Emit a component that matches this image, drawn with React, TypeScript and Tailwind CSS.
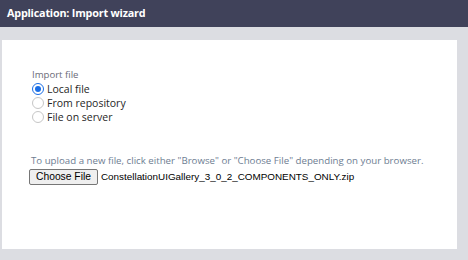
export default function App() {
  const options = [
    { label: "Local file", checked: true },
    { label: "From repository", checked: false },
    { label: "File on server", checked: false },
  ];

  return (
    <div className="w-[468px] h-[260px] bg-[#dcdde2] flex flex-col overflow-hidden" style={{ fontFamily: '"Open Sans", sans-serif' }}>
      {/* Header */}
      <div className="h-[27px] shrink-0 bg-[#40425a] flex items-center px-[7px]">
        <span className="text-white text-[10.8px] font-bold tracking-[-0.2px]">Application: Import wizard</span>
      </div>

      {/* Body */}
      <div className="flex-1 pt-[13px] pl-[2px] pr-[11px] pb-[11px] flex">
        <div className="flex-1 bg-white pl-[28px] pt-[28px]">
          <div className="text-[9.6px] text-[#6b6b78] leading-[14px] ml-[2px]">Import file</div>
          <div className="flex flex-col">
            {options.map((o) => (
              <label key={o.label} className="flex items-center h-[14px] leading-[14px] gap-[3px] text-[10.5px] text-[#1f1f1f]">
                {o.checked ? (
                  <span className="w-[12px] h-[12px] rounded-full border-[1.5px] border-[#1a6ee6] flex items-center justify-center ml-[2px]">
                    <span className="w-[6px] h-[6px] rounded-full bg-[#1a6ee6]" />
                  </span>
                ) : (
                  <span className="w-[12px] h-[12px] rounded-full border border-[#c6c6c6] ml-[2px]" />
                )}
                <span>{o.label}</span>
              </label>
            ))}
          </div>

          <div className="mt-[30px] text-[9.7px] text-[#6e7d92] leading-[14px] ml-[1px] whitespace-nowrap">
            To upload a new file, click either "Browse" or "Choose File" depending on your browser.
          </div>
          <div className="flex items-center mt-[1px] gap-[3px] -ml-[1px]" style={{ fontFamily: '"Liberation Sans", Arial, sans-serif' }}>
            <button className="h-[16px] px-[6px] text-[10.3px] leading-none text-black bg-[#efefef] border border-[#767676] rounded-[2px]">
              Choose File
            </button>
            <span className="text-[9.9px] text-black">ConstellationUIGallery_3_0_2_COMPONENTS_ONLY.zip</span>
          </div>
        </div>
      </div>
    </div>
  );
}
